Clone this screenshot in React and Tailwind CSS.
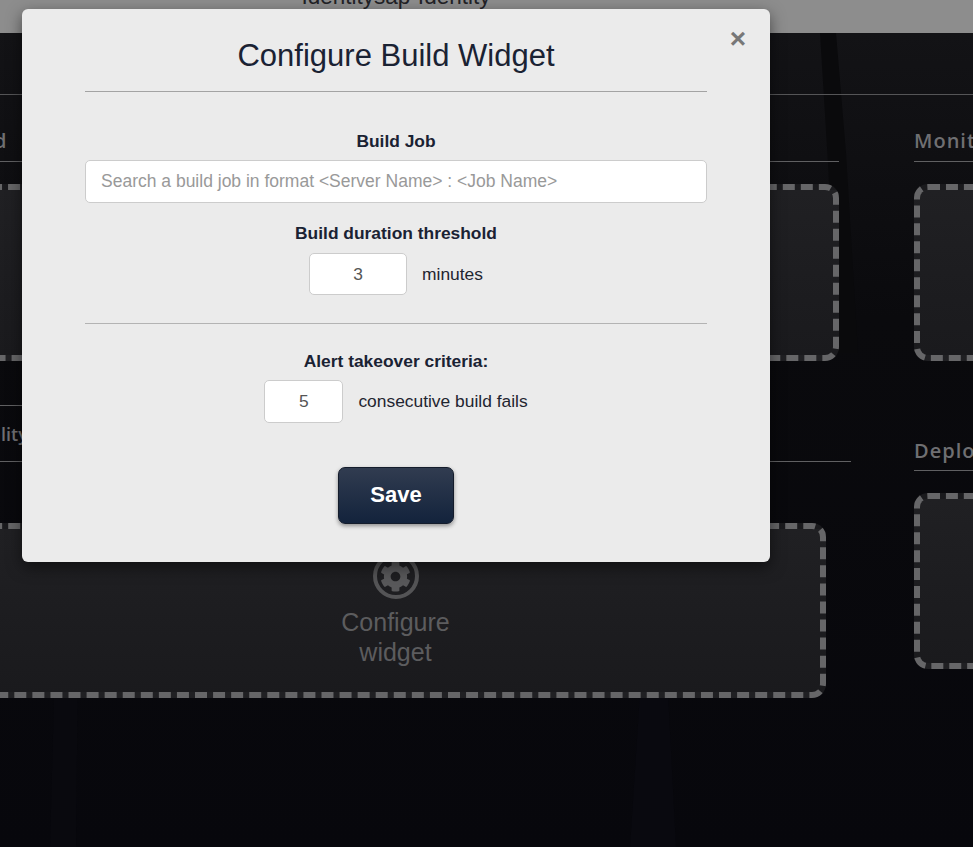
import React from "react";
import { FaCog } from "react-icons/fa";

function Heading({ children, className = "" }) {
  return (
    <div className={`font-['Open_Sans','Lato',sans-serif] font-semibold leading-[28px] text-[#6f6f72] ${className}`}>
      {children}
    </div>
  );
}

function DashedBox({ className = "", children }) {
  return (
    <div className={`border-[6px] border-dashed border-[#666668] rounded-[14px] bg-gradient-to-b from-[#202023] to-[#1a1a1d] ${className}`}>
      {children}
    </div>
  );
}

function Backdrop() {
  return (
    <svg className="absolute left-0 top-[33px]" width="973" height="814" viewBox="0 0 973 814">
      <defs>
        <linearGradient id="bgfade" x1="0" y1="0" x2="0" y2="1">
          <stop offset="0" stopColor="#131316" />
          <stop offset="0.35" stopColor="#0a0a0d" />
          <stop offset="1" stopColor="#07070c" />
        </linearGradient>
      </defs>
      <rect width="973" height="814" fill="url(#bgfade)" />
      <path d="M820 0 L836 0 L846 120 L858 320 L838 320 L828 130 Z" fill="#0a0a0c" />
      <path d="M60 440 L80 440 L76 814 L50 814 Z" fill="#09090e" />
      <path d="M640 660 L668 660 L676 814 L630 814 Z" fill="#09090f" />
    </svg>
  );
}

export default function App() {
  return (
    <div className="relative w-full h-[847px] overflow-hidden bg-[#08080c] font-['Liberation_Sans',Arial,sans-serif]">
      <Backdrop />
      <header className="relative h-[33px] bg-[#8d8d8d] overflow-hidden flex justify-center">
        <span className="mt-[-16px] ml-[-181px] text-[22.5px] leading-[26px] text-[#222226] whitespace-nowrap">Identitysap-Identity</span>
      </header>

      <main className="relative mt-[61px] border-t border-[#555557] flex">
        <div className="w-[851px] shrink-0">
          <Heading className="mt-[32px] ml-[-47px] text-[20px] tracking-[1px]">Build</Heading>
          <div className="mt-[6px] mr-[12px] border-t border-[#606062]" />
          <DashedBox className="mt-[22px] ml-[-60px] mr-[12px] h-[177px]" />
          <div className="mt-[44px] border-t border-[#606062] mr-[100px]" />
          <Heading className="mt-[14px] ml-[-35px] text-[18px]">Quality</Heading>
          <div className="mt-[13px] border-t border-[#606062]" />
          <DashedBox className="mt-[61px] ml-[-60px] mr-[25px] h-[175px] flex flex-col items-center pt-[24px] pl-[25px]">
            <div className="w-[46px] h-[46px] rounded-full border-4 border-[#545456] flex items-center justify-center">
              <FaCog className="w-[31px] h-[31px] text-[#58585a]" />
            </div>
            <div className="mt-[8px] text-center text-[25px] leading-[30px] text-[#5c5c5e]">
              Configure
              <br />
              widget
            </div>
          </DashedBox>
        </div>

        <div className="ml-[63px] w-[240px] shrink-0">
          <Heading className="mt-[32px] text-[20px] tracking-[1px]">Monitor</Heading>
          <div className="mt-[6px] border-t border-[#606062]" />
          <DashedBox className="mt-[22px] h-[177px]" />
          <Heading className="mt-[76px] text-[20px] tracking-[1px]">Deploy</Heading>
          <div className="mt-[5px] border-t border-[#606062]" />
          <DashedBox className="mt-[22px] h-[176px]" />
        </div>
      </main>

      <div className="absolute left-[22px] top-[9px] w-[748px] h-[553px] rounded-[6px] bg-[#ebebeb] shadow-[0_5px_15px_rgba(0,0,0,0.5)] px-[63px] pt-[28px] text-[#1a2233]">
        <button className="absolute right-[24px] top-[15px] text-[28px] leading-[30px] font-bold text-[#777777]">×</button>
        <h1 className="text-[31px] leading-[38px] text-center">Configure Build Widget</h1>
        <div className="mt-[16px] border-t border-[#a3a3a3]" />

        <div className="mt-[39px] text-center text-[17.4px] leading-[20px] font-bold">Build Job</div>
        <input
          readOnly
          placeholder="Search a build job in format <Server Name> : <Job Name>"
          className="mt-[9px] block w-full h-[43px] px-[15px] rounded-[5px] border border-[#cccccc] bg-white text-[17.5px] placeholder:text-[#999999] outline-none"
        />

        <div className="mt-[20px] text-center text-[17.4px] leading-[20px] font-bold">Build duration threshold</div>
        <div className="mt-[10px] flex justify-center items-center gap-[15px]">
          <input readOnly value="3" className="w-[98px] h-[42px] rounded-[5px] border border-[#cccccc] bg-white text-center text-[17.4px] text-[#555555] outline-none" />
          <span className="pb-[1px] text-[17.4px] leading-[20px] text-[#1f2530]">minutes</span>
        </div>

        <div className="mt-[28px] border-t border-[#b3b3b3]" />

        <div className="mt-[27px] text-center text-[17.4px] leading-[20px] font-bold">Alert takeover criteria:</div>
        <div className="mt-[9px] flex justify-center items-center gap-[15px]">
          <input readOnly value="5" className="w-[79px] h-[43px] rounded-[5px] border border-[#cccccc] bg-white text-center text-[17.4px] text-[#555555] outline-none" />
          <span className="pb-[2px] text-[17.4px] leading-[20px] text-[#1f2530]">consecutive build fails</span>
        </div>

        <div className="mt-[44px] flex justify-center">
          <button className="w-[116px] h-[57px] pb-[3px] rounded-[7px] border border-[#141c2b] bg-gradient-to-b from-[#313c50] to-[#13233c] text-white text-[22px] font-bold shadow-[0_2px_4px_rgba(0,0,0,0.4)]">
            Save
          </button>
        </div>
      </div>
    </div>
  );
}
